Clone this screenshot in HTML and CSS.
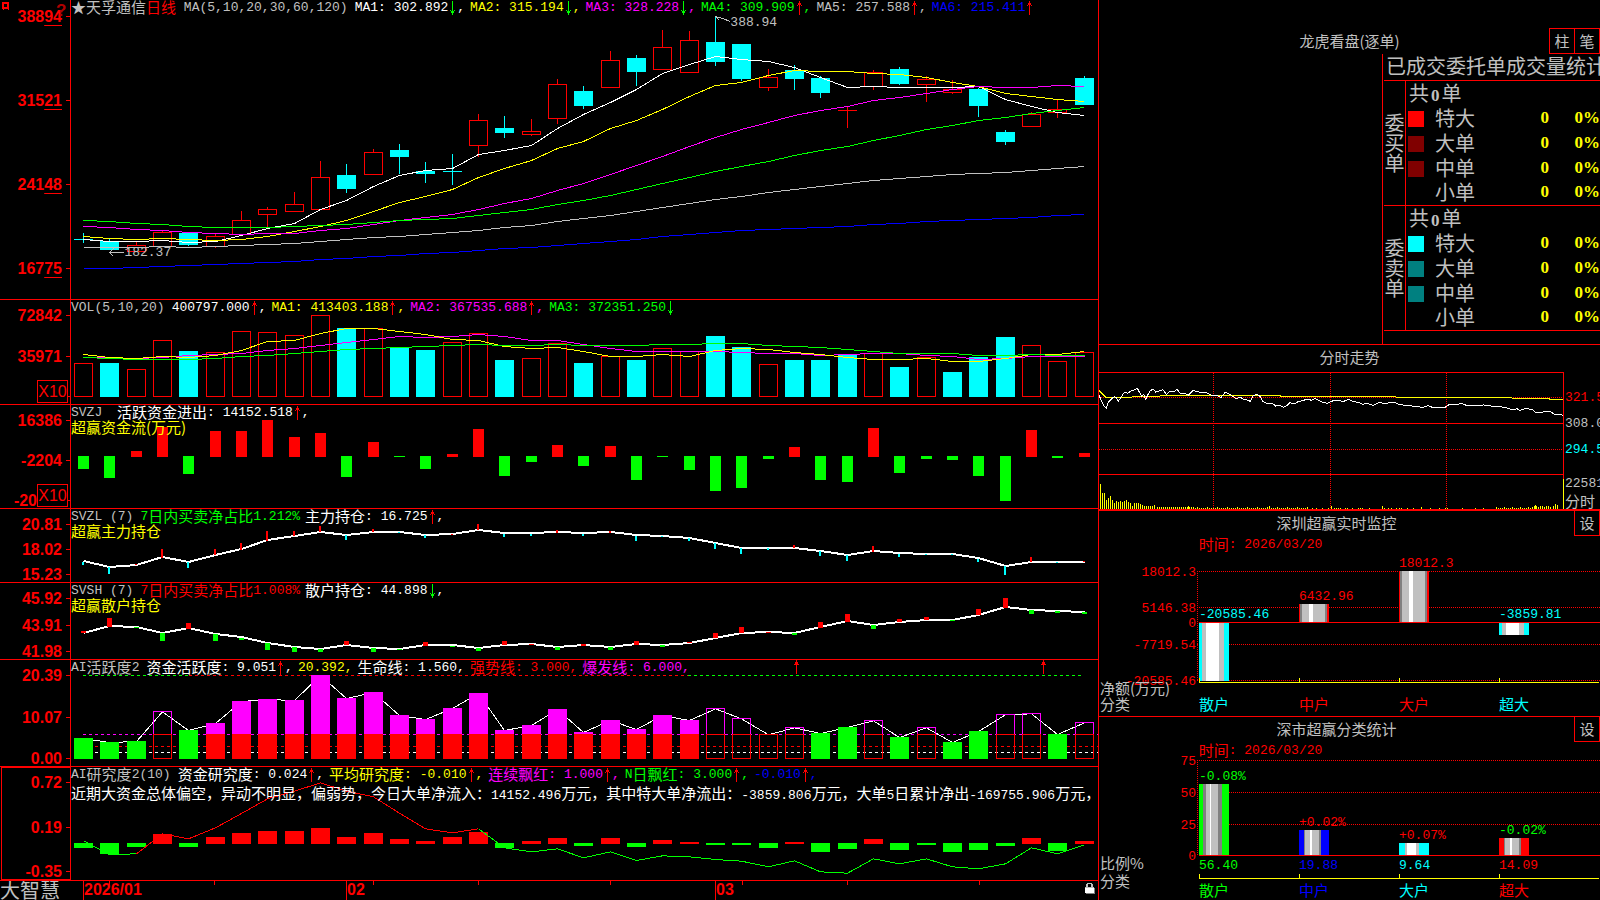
FILE: index.html
```html
<!DOCTYPE html>
<html lang="zh-CN">
<head>
<meta charset="utf-8">
<title>大智慧 - 天孚通信</title>
<link rel="stylesheet" href="styles.css">
</head>
<body>
<svg class="defs" aria-hidden="true">
  <symbol id="up" viewBox="0 0 5 14"><path d="M2 0h1v14h-1zM1 2h3v2h-3zM0 4h1v1h-1zM4 4h1v1h-1z"/></symbol>
  <symbol id="down" viewBox="0 0 5 14"><path d="M2 0h1v14h-1zM1 10h3v2h-3zM0 9h1v1h-1zM4 9h1v1h-1z"/></symbol>
</svg>
<div class="terminal">
  <main class="charts">
    <section class="panel">
      <ol class="axis axis-price"><li><span>388<u>94</u></span></li><li><span>315<u>21</u></span></li><li><span>241<u>48</u></span></li><li><span>167<u>75</u></span></li></ol>
      <svg class="corner" viewBox="0 0 8 8" aria-hidden="true"><path d="M0 0h7v7h-7zM2 2v3h3v-3z" fill-rule="evenodd"/><path d="M1 6h1v2h-1zM6 6h1v2h-1z"/></svg>
      <span class="help">?</span>
      <div class="plot">
        <svg class="canvas" id="price" viewBox="71 0 1027 299" preserveAspectRatio="none"></svg>
        <header class="legend">
          <span class="title"><span class="zh">★天孚通信<span class="red">日线</span></span>&nbsp;MA(5,10,20,30,60,120)</span>
          <span class="white">MA1: 302.892<svg class="arrow down"><use href="#down"/></svg>,</span>
          <span class="yellow">MA2: 315.194<svg class="arrow down"><use href="#down"/></svg>,</span>
          <span class="magenta">MA3: 328.228<svg class="arrow down"><use href="#down"/></svg>,</span>
          <span class="green">MA4: 309.909<svg class="arrow"><use href="#up"/></svg>,</span>
          <span class="grey">MA5: 257.588<svg class="arrow"><use href="#up"/></svg>,</span>
          <span class="blue">MA6: 215.411<svg class="arrow"><use href="#up"/></svg></span>
        </header>
        <span class="mark mark-low">182.37</span>
        <span class="mark mark-high">388.94</span>
      </div>
    </section>

    <section class="panel">
      <ol class="axis"><li>72842</li><li>35971</li><li></li></ol>
      <span class="unit">X10</span>
      <div class="plot">
        <svg class="canvas" id="vol" viewBox="71 300 1027 104" preserveAspectRatio="none"></svg>
        <header class="legend">
          <span class="title">VOL(5,10,20)</span>
          <span class="white">400797.000<svg class="arrow"><use href="#up"/></svg>,</span>
          <span class="yellow">MA1: 413403.188<svg class="arrow"><use href="#up"/></svg>,</span>
          <span class="magenta">MA2: 367535.688<svg class="arrow"><use href="#up"/></svg>,</span>
          <span class="green">MA3: 372351.250<svg class="arrow down"><use href="#down"/></svg></span>
        </header>
      </div>
    </section>

    <section class="panel">
      <ol class="axis"><li>16386</li><li>-2204</li><li><span class="partial">-20</span></li></ol>
      <span class="unit">X10</span>
      <div class="plot">
        <svg class="canvas" id="flow" viewBox="71 405 1027 103" preserveAspectRatio="none"></svg>
        <header class="legend">
          <span class="title">SVZJ&nbsp;</span>
          <span class="white"><span class="zh">活跃资金进出</span>: 14152.518<svg class="arrow"><use href="#up"/></svg>,</span>
        </header>
        <p class="sub zh yellow">超赢资金流(万元)</p>
      </div>
    </section>

    <section class="panel">
      <ol class="axis"><li>20.81</li><li>18.02</li><li>15.23</li></ol>
      <div class="plot">
        <svg class="canvas" id="main-hold" viewBox="71 509 1027 73" preserveAspectRatio="none"></svg>
        <header class="legend">
          <span class="title">SVZL (7)</span>
          <span class="green">7<span class="zh">日内买卖净占比</span>1.212%</span>
          <span class="white"><span class="zh">主力持仓</span>: 16.725<svg class="arrow"><use href="#up"/></svg>,</span>
        </header>
        <p class="sub zh yellow">超赢主力持仓</p>
      </div>
    </section>

    <section class="panel">
      <ol class="axis"><li>45.92</li><li>43.91</li><li>41.98</li></ol>
      <div class="plot">
        <svg class="canvas" id="retail-hold" viewBox="71 583 1027 76" preserveAspectRatio="none"></svg>
        <header class="legend">
          <span class="title">SVSH (7)</span>
          <span class="red">7<span class="zh">日内买卖净占比</span>1.008%</span>
          <span class="white"><span class="zh">散户持仓</span>: 44.898<svg class="arrow down"><use href="#down"/></svg>,</span>
        </header>
        <p class="sub zh yellow">超赢散户持仓</p>
      </div>
    </section>

    <section class="panel">
      <ol class="axis"><li>20.39</li><li>10.07</li><li>0.00</li></ol>
      <div class="plot">
        <svg class="canvas" id="active" viewBox="71 660 1027 106" preserveAspectRatio="none"></svg>
        <header class="legend">
          <span class="title">AI<span class="zh">活跃度</span>2</span>
          <span class="white"><span class="zh">资金活跃度</span>: 9.051<svg class="arrow"><use href="#up"/></svg>,</span>
          <span class="yellow">20.392,</span>
          <span class="white"><span class="zh">生命线</span>: 1.560,</span>
          <span class="red"><span class="zh">强势线</span>: 3.000,</span>
          <span class="magenta"><span class="zh">爆发线</span>: 6.000,</span>
        </header>
      </div>
    </section>

    <section class="panel">
      <ol class="axis axis-selected"><li>0.72</li><li>0.19</li><li>-0.35</li></ol>
      <div class="plot">
        <svg class="canvas" id="research" viewBox="71 767 1027 113" preserveAspectRatio="none"></svg>
        <header class="legend">
          <span class="title">AI<span class="zh">研究度</span>2(10)</span>
          <span class="white"><span class="zh">资金研究度</span>: 0.024<svg class="arrow"><use href="#up"/></svg>,</span>
          <span class="yellow"><span class="zh">平均研究度</span>: -0.010<svg class="arrow"><use href="#up"/></svg>,</span>
          <span class="magenta"><span class="zh">连续飘红</span>: 1.000<svg class="arrow"><use href="#up"/></svg>,</span>
          <span class="green">N<span class="zh">日飘红</span>: 3.000<svg class="arrow"><use href="#up"/></svg>,</span>
          <span class="blue">-0.010<svg class="arrow"><use href="#up"/></svg>,</span>
        </header>
        <p class="comment white"><span class="zh">近期大资金总体偏空，异动不明显，偏弱势，今日大单净流入：</span>14152.496<span class="zh">万元，其中特大单净流出：</span>-3859.806<span class="zh">万元，大单</span>5<span class="zh">日累计净出</span>-169755.906<span class="zh">万元，</span></p>
      </div>
    </section>

    <footer class="timeline">
      <span class="brand">大智慧</span>
      <div class="months">
        <svg class="canvas" id="ticks" viewBox="71 881 1027 19" preserveAspectRatio="none"></svg>
        <span></span><span class="month">2026/01</span><span class="month">02</span><span class="month">03</span>
        <svg class="lock" viewBox="0 0 10 11" aria-hidden="true"><path fill="#c0c0c0" d="M2 0h5v1h-5zM1 1h2v3h-2zM6 1h2v3h-2z"/><path fill="#808080" d="M1 10h9v1h-9zM9 5h1v6h-1z"/><path fill="#fff" d="M0 4h9v6h-9z"/><path fill="#c0c0c0" d="M0 4h9v1h-9z"/></svg>
      </div>
    </footer>
  </main>

  <aside class="side">
    <section class="orders">
      <div class="orders-head">
        <h2 class="zh">龙虎看盘(逐单)</h2>
        <div class="modes"><button type="button">柱</button><button type="button">笔</button></div>
      </div>
      <div class="orders-body">
        <table class="stats">
          <caption>已成交委托单成交量统计</caption>
          <tbody>
            <tr><th rowspan="5" scope="rowgroup" class="group">委<br>买<br>单</th><td colspan="4" class="sum">共<b>0</b>单</td></tr>
            <tr><td class="key"><i class="swatch buy1"></i></td><th scope="row">特大</th><td>0</td><td>0%</td></tr>
            <tr><td class="key"><i class="swatch buy2"></i></td><th scope="row">大单</th><td>0</td><td>0%</td></tr>
            <tr><td class="key"><i class="swatch buy2"></i></td><th scope="row">中单</th><td>0</td><td>0%</td></tr>
            <tr class="last"><td class="key"></td><th scope="row">小单</th><td>0</td><td>0%</td></tr>
          </tbody>
          <tbody>
            <tr><th rowspan="5" scope="rowgroup" class="group">委<br>卖<br>单</th><td colspan="4" class="sum">共<b>0</b>单</td></tr>
            <tr><td class="key"><i class="swatch sell1"></i></td><th scope="row">特大</th><td>0</td><td>0%</td></tr>
            <tr><td class="key"><i class="swatch sell2"></i></td><th scope="row">大单</th><td>0</td><td>0%</td></tr>
            <tr><td class="key"><i class="swatch sell2"></i></td><th scope="row">中单</th><td>0</td><td>0%</td></tr>
            <tr class="last"><td class="key"></td><th scope="row">小单</th><td>0</td><td>0%</td></tr>
          </tbody>
        </table>
      </div>
    </section>

    <section class="intraday">
      <h2 class="zh">分时走势</h2>
      <div class="intraday-body">
        <div class="intraday-plot"><svg class="canvas" id="intraday" viewBox="1099 372 465 137" preserveAspectRatio="none"></svg></div>
        <ol class="levels"><li class="red">321.5</li><li class="grey">308.0</li><li class="cyan">294.5</li><li class="grey">22581</li><li class="grey zh">分时</li></ol>
      </div>
    </section>

    <section class="monitor">
      <div class="monitor-head"><h2 class="zh">深圳超赢实时监控</h2><button type="button">设</button></div>
      <p class="date red"><span class="zh">时间</span>: 2026/03/20</p>
      <div class="bars" id="net"><svg class="canvas" viewBox="1099 554 501 162" preserveAspectRatio="none"></svg></div>
    </section>

    <section class="monitor share">
      <div class="monitor-head"><h2 class="zh">深市超赢分类统计</h2><button type="button">设</button></div>
      <p class="date red"><span class="zh">时间</span>: 2026/03/20</p>
      <div class="bars" id="ratio"><svg class="canvas" viewBox="1099 759 501 141" preserveAspectRatio="none"></svg></div>
    </section>
  </aside>
</div>
<script src="charts.js"></script>
</body>
</html>
```
FILE: styles.css
```css
* { box-sizing: border-box; }

body {
  margin: 0;
  background: #000;
  color: #c0c0c0;
  font-family: "Liberation Mono", "Noto Sans CJK SC", monospace;
  font-size: 13px;
  line-height: 16px;
}

h2, p, ol { margin: 0; padding: 0; font-weight: 400; list-style: none; }

.defs { position: absolute; width: 0; height: 0; }
.zh { font-family: "Noto Sans CJK SC", sans-serif; font-size: 15px; font-weight: 400; }
.white { color: #fff; }
.yellow { color: #ff0; }
.magenta { color: #f0f; }
.green { color: #0f0; }
.grey { color: #c0c0c0; }
.blue { color: #00f; }
.cyan { color: #0ff; }
.red { color: #f00; }

.terminal {
  display: grid;
  grid-template-columns: minmax(0, 1099fr) minmax(0, 501fr);
  height: 100vh;
  overflow: hidden;
}

/* left: stacked indicator charts */
.charts {
  display: grid;
  grid-template-rows: 300fr 105fr 104fr 74fr 77fr 107fr 114fr 19fr;
  min-height: 0;
  border-right: 1px solid #f00;
}
.panel {
  position: relative;
  display: grid;
  grid-template-columns: 71px minmax(0, 1fr);
  min-height: 0;
  border-bottom: 1px solid #f00;
}
.axis {
  display: flex;
  flex-direction: column;
  justify-content: space-between;
  padding: 15px 0 7px;
  border-right: 1px solid #f00;
  color: #f00;
  font: 700 16px/1px "Liberation Sans", sans-serif;
}
.axis-price { padding: 16px 0 30px; }
.axis-selected { border: 1px solid #f00; margin-left: 1px; padding-top: 14px; }
.axis li {
  display: flex;
  justify-content: flex-end;
  align-items: center;
  gap: 4px;
  height: 1px;
}
.axis li::after { content: ""; width: 4px; height: 1px; background: #f00; }
.axis u { text-decoration-thickness: 1px; text-underline-offset: 3px; }
.partial { margin-right: 25px; }

.unit {
  position: absolute;
  left: 37px;
  bottom: 1px;
  width: 31px;
  height: 23px;
  border: 1px solid #f00;
  background: #000;
  color: #f00;
  font: 16px/21px "Liberation Sans", sans-serif;
  text-align: center;
}
.corner { position: absolute; left: 2px; top: 2px; width: 8px; height: 8px; fill: #f00; }
.help { position: absolute; left: 56px; top: 2px; color: #b00000; font: 700 17px/18px "Liberation Sans", sans-serif; }

.plot { position: relative; min-width: 0; }
.canvas { position: absolute; inset: 0; width: 100%; height: 100%; shape-rendering: crispEdges; }
.canvas * { vector-effect: non-scaling-stroke; }
.legend { position: relative; display: flex; gap: 5px; height: 16px; white-space: nowrap; }
.legend > span { display: flex; align-items: center; height: 16px; white-space: pre; }
.legend .zh { line-height: 14px; padding-bottom: 2px; }
.legend .zh .red { line-height: 14px; }
.title { margin-right: 2px; color: #c0c0c0; }
.arrow { width: 5px; height: 14px; margin: 0 2px; fill: #f00; shape-rendering: crispEdges; }
.arrow.down { fill: #0f0; }
.sub { position: relative; line-height: 12px; }
.comment { position: relative; height: 20px; line-height: 20px; white-space: nowrap; }
.mark { position: absolute; color: #c0c0c0; }
.mark-low { left: 5.2%; top: 82%; }
.mark-high { left: 64.2%; top: 5%; }

.timeline { display: grid; grid-template-columns: 71px minmax(0, 1fr); min-height: 0; }
.brand { font: 400 20px/18px "Noto Sans CJK SC", sans-serif; }
.months { position: relative; display: grid; grid-template-columns: 12fr 263fr 369fr 383fr; }
.month { border-left: 1px solid #f00; color: #f00; font: 700 16px/18px "Liberation Sans", sans-serif; }
.lock { position: absolute; right: 3px; top: 2px; width: 10px; height: 11px; shape-rendering: crispEdges; }

/* right: side panels */
.side { display: grid; grid-template-rows: 345fr 165fr 207fr 183fr; min-height: 0; }
.side section { display: flex; flex-direction: column; min-height: 0; overflow: hidden; border-bottom: 1px solid #f00; }
.side .share { border-bottom: 0; }
.side button {
  width: 26px;
  height: 26px;
  padding: 0;
  border: 1px solid #f00;
  background: #000;
  color: #c0c0c0;
  font: 400 15px/22px "Noto Sans CJK SC", sans-serif;
}
.orders-head { display: grid; grid-template-columns: 1fr auto 1fr; align-items: center; padding-top: 28px; }
.orders-head h2 { grid-column: 2; }
.modes { display: flex; justify-self: end; }
.modes button + button { margin-left: -1px; }
.orders-body { flex: 1; align-self: flex-end; width: 218px; padding-left: 1px; overflow: hidden; border-left: 1px solid #f00; }
.stats { width: 100%; border-spacing: 0; font: 400 20px/22px "Noto Sans CJK SC", sans-serif; }
.stats caption { height: 27px; padding-left: 2px; border-bottom: 1px solid #f00; line-height: 24px; text-align: left; white-space: nowrap; contain: inline-size; }
.stats tr { height: 25px; }
.stats th { padding: 0; font-weight: 400; line-height: 20px; text-align: left; }
.stats td { height: 25px; padding: 0 0 2px; color: #ff0; font: 700 17px/20px "Liberation Serif", serif; text-align: right; vertical-align: middle; }
.stats tbody th[scope="row"] { padding: 0 0 2px; vertical-align: middle; }
.stats .group { width: 22px; border-right: 1px solid #f00; border-bottom: 1px solid #f00; text-align: center; vertical-align: middle; }
.stats .sum { padding-left: 3px; color: #c0c0c0; font: 400 20px/20px "Noto Sans CJK SC", sans-serif; text-align: left; }
.stats .sum b { padding: 0 2px; font: 700 17px/1px "Liberation Serif", serif; }
.stats .key { width: 29px; padding: 0 0 0 2px; text-align: left; }
.stats td:last-child:not(.sum) { width: 51px; }
.stats .last td, .stats .last th { border-bottom: 1px solid #f00; }
.swatch { display: block; width: 16px; height: 16px; }
.buy1 { background: #f00; }
.buy2 { background: #800000; }
.sell1 { background: #0ff; }
.sell2 { background: #008080; }

.intraday h2 { line-height: 24px; height: 27px; text-align: center; }
.intraday-body { display: flex; flex: 1; min-height: 0; }
.intraday-plot { position: relative; flex: 1; }
.levels { display: grid; grid-template-rows: 26fr 26fr 26fr 34fr 17fr 8fr; width: 36px; padding-left: 1px; }
.levels li { align-self: end; height: 0; line-height: 0; }

.monitor:nth-of-type(3) { border-top: 1px solid #f00; }
.monitor-head { display: flex; height: 25px; }
.monitor-head h2 { flex: 1; line-height: 24px; text-align: center; }
.monitor-head button { margin-top: -1px; }
.date { display: flex; align-items: center; height: 17px; padding-left: 19.9%; white-space: pre; }
.date .zh { line-height: 14px; padding-bottom: 2px; }
.bars { position: relative; flex: 1; }
.tag { position: absolute; line-height: 0; white-space: pre; }
.tag.end { transform: translateX(-100%); }
```
FILE: charts.js
```js
const RED = '#f00', CYAN = '#0ff', GREEN = '#0f0', WHITE = '#fff', YELLOW = '#ff0', MAGENTA = '#f0f', GREY = '#c0c0c0', BLUE = '#00f';
const NS = 'http://www.w3.org/2000/svg';

function add(svg, tag, attrs) {
  const el = document.createElementNS(NS, tag);
  for (const k in attrs) el.setAttribute(k, attrs[k]);
  svg.appendChild(el);
  return el;
}
const nums = s => s.trim().split(/[\s,]+/).map(Number);
const dayX = i => Math.round(83.1 + 26.33 * i);
const get = id => document.getElementById(id);
const fill = (svg, x, y, w, h, color) => add(svg, 'rect', { x, y, width: w, height: h, fill: color });
const frame = (svg, x, y, w, h, color) => add(svg, 'rect', { x: x + 0.5, y: y + 0.5, width: w - 1, height: h - 1, fill: 'none', stroke: color });
const poly = (svg, pts, color, width = 1) => add(svg, 'polyline', { points: pts.map(p => p.join(',')).join(' '), fill: 'none', stroke: color, 'stroke-width': width });
const line = (svg, x1, y1, x2, y2, color, dash) => add(svg, 'line', Object.assign({ x1, y1, x2, y2, stroke: color }, dash ? { 'stroke-dasharray': dash } : {}));

/* series are stored in thirds of a unit from the panel origin */
const at = (origin, v) => Math.round(origin + (v - 1) / 3);
const series = (svg, origin, s, color, width = 1) =>
  poly(svg, nums(s).map((v, i) => [dayX(i) + 0.5, at(origin, v) + (width === 1 ? 0.5 : 0)]), color, width);
const bars = s => s.trim().split(/\s+/).map(t => [t[0], Number(t.slice(1))]);

/* price */
{
  const svg = get('price');
  const candles = `c699,717,717,729 c717,724,750,750 r727,736,752,754 r693,697,738,742 c699,699,735,738 r702,709,738,744
  r633,661,703,709 r621,628,643,683 r576,613,632,636 r483,532,626,628 c492,525,567,579 r447,457,521,525 c432,450,471,522
  c486,513,522,549 c462,514,514,555 r342,361,434,470 c348,384,399,414 r357,394,401,408 r237,253,355,372 c258,273,318,327
  r153,181,260,260 c165,174,216,258 r90,142,206,206 r93,121,215,219 c48,126,186,198 c132,132,237,243 r207,232,260,273
  c195,210,237,270 c228,234,279,294 r320,331,331,384 r210,217,257,270 c201,207,252,255 r228,238,251,306 r240,268,275,281
  c264,267,318,351 c390,396,426,435 r336,343,377,381 r299,328,335,354 c228,234,315,315`;
  candles.trim().split(/\s+/).forEach((t, i) => {
    const up = t[0] === 'r', color = up ? RED : CYAN, x = dayX(i);
    const [hi, top, bot, lo] = nums(t.slice(1)).map(v => Math.round(v / 3));
    if (top === bot) { fill(svg, x - 9, top, 19, 1, color); fill(svg, x, hi, 1, lo - hi, color); return; }
    fill(svg, x, hi, 1, Math.max(0, top - hi), color);
    fill(svg, x, bot, 1, Math.max(0, lo - bot), color);
    if (up) frame(svg, x - 9, top, 19, bot - top + 1, color); else fill(svg, x - 9, top, 19, bot - top, color);
  });
  series(svg, 0, '805,805,802,799,797,794,791,788,785,779,775,770,766,761,757,751,746,742,736,730,724,718,709,703,697,691,688,685,682,679,673,670,664,661,658,655,652,647,643', BLUE);
  series(svg, 0, '742,742,742,740,742,739,737,734,731,725,718,712,709,703,697,690,682,675,664,655,646,634,622,610,598,589,578,569,560,550,541,535,529,523,520,517,511,506,499', GREY);
  series(svg, 0, '718,724,725,721,727,724,706,685,670,628,601,560,527,510,505,463,451,436,385,343,306,268,220,192,170,178,184,202,232,262,260,262,262,262,258,298,318,338,346', WHITE);
  series(svg, 0, '709,714,718,716,719,722,717,708,695,679,661,635,607,588,569,532,505,482,445,424,386,361,328,289,257,246,226,211,214,214,219,223,231,246,258,280,289,297,304', YELLOW);
  series(svg, 0, '679,682,687,691,696,700,703,701,700,691,685,674,662,653,643,628,610,595,571,551,523,496,469,439,412,388,367,346,332,319,301,292,280,268,259,262,262,257,259', MAGENTA);
  series(svg, 0, '661,664,670,673,679,682,682,682,680,676,674,667,661,658,654,646,637,628,613,601,586,568,550,532,514,500,485,466,452,438,420,406,388,376,360,352,340,332,322', GREEN);
  poly(svg, [[113.5, 248.5], [109.5, 252.5], [113.5, 256.5]], GREY);
  line(svg, 109, 252.5, 124, 252.5, GREY);
  poly(svg, [[715.5, 16.5], [722.5, 18.5], [730.5, 21.5]], GREY);
  poly(svg, [[715.5, 16.5], [719.5, 20.5]], GREY);
}

/* volume */
{
  const svg = get('vol'), base = 397;
  bars(`r205 c204 r223 r136 c168 r172 r109 r112 r121 r61 c99 r100 c158 c165 r142 r115 c195 r190 r145 c204 r184 c195 r160 r170
  c123 c156 r208 c195 c195 c181 r176 c216 r186 c231 c186 c126 r151 r198 r172`).forEach(([k, v], i) => {
    const y = at(295, v), x = dayX(i) - 9;
    if (k === 'r') frame(svg, x, y, 19, base - y, RED); else fill(svg, x, y, 19, base - y, CYAN);
  });
  series(svg, 295, '187,187,190,186,180,179,176,166,160,151,143,132,124,127,125,119,124,135,136,149,160,169,169,169,168,172,175,175,181,178,175,176,180,185,193,190,184,184,184', MAGENTA);
  series(svg, 295, '178,187,191,184,187,181,165,139,135,116,100,100,108,119,132,137,154,160,157,169,184,184,178,184,166,160,164,171,177,188,193,193,190,199,199,190,179,178,169', YELLOW);
  series(svg, 295, '187,190,192,193,193,189,184,181,175,169,163,160,156,154,151,149,151,151,148,151,151,151,149,148,145,145,150,154,158,162,169,175,175,176,181,181,178,181,182', GREEN);
}

/* bars growing up (red) or down (green) from a zero line */
function signed(svg, origin, zero, width, s) {
  bars(s).forEach(([k, v], i) => {
    const x = dayX(i) - (width - 1) / 2, y = Math.round(origin + v / 3);
    if (k === 'r') fill(svg, x, y, width, zero + 1 - y, RED); else fill(svg, x, zero, width, y - zero, GREEN);
  });
}
signed(get('flow'), 295, 456, 11, `g522 g549 r468 r396 g537 r408 r408 r375 r426 r414 g546 r441 g486 g522 r477 r402 g543 g501 r450 g513
  r453 g555 g486 g525 g588 g579 g492 r456 g555 g561 r399 g534 g492 g495 g543 g618 r405 g489 r474`);

/* holdings: a heavy line with ticks to each side */
function holding(svg, values, ticks, width, down) {
  const v = nums(values);
  series(svg, 500, values, WHITE, 2);
  bars(ticks).forEach(([k, t], i) => {
    const a = Math.round(500 + v[i] / 3), b = Math.round(500 + t / 3);
    fill(svg, dayX(i) - (width - 1) / 2 | 0, Math.min(a, b), width, Math.max(1, Math.abs(b - a)), k === 'r' ? RED : down);
  });
}
holding(get('main-hold'),
  '185,201,196,173,187,166,149,122,108,96,105,96,97,105,104,90,101,101,98,101,98,107,108,114,130,144,144,144,154,165,155,161,162,162,176,198,186,186,186',
  `c194 c222 r192 r147 c204 r147 r129 r93 r93 r78 c120 r87 c99 c114 r102 r72 c111 c108 r90 c108 r93 c123 c111 c123 c147 c162 c150
  r135 c168 c183 r138 c171 c165 c165 c186 c225 r171 c189 r184`, 2, CYAN);
holding(get('retail-hold'),
  '399,380,381,399,386,403,413,430,442,448,436,444,447,437,437,445,435,434,441,437,441,434,436,430,415,400,398,399,383,365,376,367,361,360,346,323,330,333,336',
  `r393 r354 g384 g423 r369 g423 g420 g450 g456 g456 r423 g456 g450 r426 g441 g453 r423 r432 g450 r432 g450 r423 g441 r426 r399
  r381 r396 g405 r366 r342 g387 r357 r351 g363 r327 r294 g342 g339 g342`, 5, GREEN);

/* activity */
{
  const svg = get('active'), base = 759, split = 734;
  const data = bars(`g249 g261 g258 h169 g225 m204 m138 m132 m135 m60 m129 m111 m180 m192 m159 m114 m225 m210 m162 m231 m195 m222
  m180 m195 h160 h190 h238 h217 g234 g216 h196 g246 h217 g261 g228 h178 h175 g237 h202`);
  line(svg, 83, 675.5, 189, 675.5, GREEN, '3 3');
  line(svg, 189, 675.5, 688, 675.5, RED, '3 3');
  line(svg, 688, 675.5, 1084, 675.5, GREEN, '3 3');
  line(svg, 83, 734.5, 1098, 734.5, MAGENTA, '3 3');
  line(svg, 83, 746.5, 1098, 746.5, RED, '3 3');
  line(svg, 83, 752.5, 1098, 752.5, WHITE, '3 3');
  poly(svg, data.map(([, v], i) => [dayX(i) + 0.5, 655.5 + v / 3]), WHITE);
  data.forEach(([k, v], i) => {
    const x = dayX(i) - 9, y = Math.round(655 + v / 3);
    if (k === 'g') fill(svg, x, y, 19, base - y, GREEN);
    if (k === 'm') { fill(svg, x, y, 19, split - y, MAGENTA); fill(svg, x, split, 19, base - split, RED); }
    if (k === 'h') {
      if (y < split) frame(svg, x, y, 19, split - y + 1, MAGENTA);
      frame(svg, x, split, 19, base - split, RED);
    }
  });
  [796, 1043].forEach(x => {
    fill(svg, x, 660, 1, 14, RED);
    fill(svg, x - 1, 662, 3, 2, RED);
    fill(svg, x - 2, 664, 5, 1, RED);
  });
}

/* research */
{
  const svg = get('research');
  signed(svg, 655, 843, 19, `g579 g597 g576 r537 g576 r546 r534 r528 r528 r519 r546 r534 r552 r558 r546 r531 g579 r558 r549 g573 r549
  g576 r555 r561 g570 g570 g579 r561 g591 g582 r552 g585 g570 g591 g585 g573 r549 g588 r558`);
  const pts = nums('556,597,595,535,550,517,474,430,407,382,407,424,473,520,532,520,577,589,580,607,589,615,601,604,612,617,634,616,649,653,610,625,610,634,640,625,577,595,568')
    .map((v, i) => [dayX(i) + 0.5, 655.5 + v / 3]);
  poly(svg, pts.slice(0, 3), GREEN);
  poly(svg, pts.slice(2, 16), RED);
  poly(svg, pts.slice(15), GREEN);
}

[109, 214, 373, 478, 610, 742, 847, 979].forEach(x => fill(get('ticks'), x, 881, 1, 4, RED));

/* intraday */
{
  const svg = get('intraday');
  const pairs = s => { const n = nums(s), out = []; for (let i = 0; i < n.length; i += 2) out.push([1095 + n[i] / 3, 340 + n[i + 1] / 3]); return out; };
  [397, 449].forEach(y => line(svg, 1099, y + 0.5, 1563, y + 0.5, RED, '1 1'));
  [1213, 1330, 1446].forEach(x => line(svg, x + 0.5, 373, x + 0.5, 509, RED, '1 1'));
  [372, 423, 474].forEach(y => fill(svg, 1099, y, 465, 1, RED));
  fill(svg, 1563, 372, 1, 137, RED);
  const heights = {};
  nums('75 48 48 27 33 40 27 18 24 21 24 21 24 27 21 18 9 18 18 18 15 12 9 9 9 9 9 12').forEach((h, i) => heights[16 + 6 * i] = h);
  for (let x = 187, i = 0; x < 640; x += 6, i++) heights[x] = x < 240 || i % 5 === 0 ? 6 : x < 300 ? 7 : 3;
  nums('653 665 683 701 719 725 731 737 752 758 773 791 797 803 824 868 880 890 905 914 920 938 956 1007 1034 1052 1058 1102 1142 1166').forEach(x => heights[x] = 3);
  for (let x = 1204, i = 0; x < 1372; x += 6, i++) heights[x] = x > 1310 ? 6 + (i % 3 ? 3 : 0) : i % 4 ? 3 : 6;
  Object.assign(heights, { 280: 9, 523: 9, 710: 9, 862: 9, 980: 6, 1322: 12, 1376: 9, 1382: 15, 1388: 12, 1405: 90 });
  for (const x in heights) { const h = Math.round(heights[x] / 3); fill(svg, Math.round(1095 + x / 3 - 0.5), 509 - h, 1, h, YELLOW); }
  poly(svg, pairs('12,151 32,172 110,172 112,169 194,169 196,166 556,166 558,169 902,169 904,172 1250,172 1252,175 1362,175 1364,178 1404,178'), YELLOW);
  poly(svg, pairs(`12,165 20,185 28,200 34,205 40,187 48,178 58,170 64,172 70,184 76,175 88,157 98,160 108,153 118,150 127,145 134,158
  140,168 146,163 152,178 158,165 166,152 174,147 182,156 192,153 204,149 214,163 226,153 238,154 246,148 256,160 268,160 280,166
  294,151 306,155 318,157 332,158 340,160 352,168 364,166 378,172 390,158 400,160 412,168 424,176 436,172 446,178 456,180 466,184
  474,168 484,163 494,168 504,184 514,190 526,190 536,193 542,198 552,195 566,202 576,196 584,188 600,191 610,184 624,182 636,177
  650,181 660,176 672,182 684,187 696,190 708,184 722,181 732,182 746,184 760,178 772,184 790,187 802,193 816,190 834,196 852,188
  868,190 900,187 912,193 930,196 950,198 984,202 1000,197 1012,202 1050,202 1062,194 1078,195 1100,190 1116,197 1166,195 1188,198
  1230,202 1244,207 1258,210 1266,206 1274,212 1290,206 1312,208 1322,217 1340,217 1352,214 1366,214 1376,222 1396,223 1404,227`), WHITE);
}

/* category bar charts */
function category(id, top, height, draw) {
  const box = get(id), svg = box.querySelector('svg');
  const tag = (x, y, text, color, cls = '') => {
    const el = document.createElement('span');
    el.className = 'tag ' + color + ' ' + cls;
    el.textContent = text;
    el.style.left = (x - 1099) / 501 * 100 + '%';
    el.style.top = (y - top) / height * 100 + '%';
    box.appendChild(el);
  };
  const cylinder = (x, y, h, stripes) => {
    stripes.split(' ').forEach(s => {
      const [w, c] = s.split(':');
      fill(svg, x, y, Number(w), h, c);
      x += Number(w);
    });
  };
  const scale = y => {
    fill(svg, 1199, y, 400, 1, YELLOW);
    [1199, 1299, 1399, 1499].forEach(x => fill(svg, x, y - 4, 1, 4, YELLOW));
  };
  draw(svg, tag, cylinder, scale);
}

category('net', 554, 162, (svg, tag, cylinder, scale) => {
  [572, 608, 644, 680].forEach(y => line(svg, 1197, y + 0.5, 1600, y + 0.5, RED, '1 1'));
  line(svg, 1197.5, 572, 1197.5, 681, RED, '1 1');
  fill(svg, 1199, 623, 401, 1, RED);
  const cold = '3:#0ff 4:#c0c0c0 13:#fff 5:#c0c0c0 5:#0ff', warm = '1:#f00 2:#808080 7:#c0c0c0 4:#fff 12:#c0c0c0 2:#808080 2:#f00';
  cylinder(1199, 624, 57, cold);
  cylinder(1299, 605, 18, warm);
  cylinder(1399, 572, 51, warm);
  cylinder(1499, 624, 11, cold);
  scale(682);
  [['18012.3', 574], ['5146.38', 610], ['0', 625], ['-7719.54', 646], ['-20585.46', 682]].forEach(([t, y]) => tag(1196, y, t, 'red', 'end'));
  tag(1199, 616, '-20585.46', 'cyan');
  tag(1299, 598, '6432.96', 'red');
  tag(1399, 565, '18012.3', 'red');
  tag(1499, 616, '-3859.81', 'cyan');
  tag(1100, 688, '净额(万元)', 'grey', 'zh');
  tag(1100, 704, '分类', 'grey', 'zh');
  [['散户', 'cyan'], ['中户', 'red'], ['大户', 'red'], ['超大', 'cyan']].forEach(([t, c], i) => tag(1199 + 100 * i, 704, t, c, 'zh'));
});

category('ratio', 759, 141, (svg, tag, cylinder, scale) => {
  [760, 792, 824].forEach(y => line(svg, 1197, y + 0.5, 1600, y + 0.5, RED, '1 1'));
  line(svg, 1197.5, 760, 1197.5, 855, RED, '1 1');
  cylinder(1199, 784, 71, '4:#0f0 3:#808080 4:#c0c0c0 1:#fff 7:#c0c0c0 4:#808080 7:#0f0');
  cylinder(1299, 830, 25, '5:#00f 1:#808080 5:#c0c0c0 2:#fff 7:#c0c0c0 2:#808080 8:#00f');
  cylinder(1399, 843, 12, '6:#0ff 2:#c0c0c0 9:#fff 3:#c0c0c0 10:#0ff');
  cylinder(1499, 838, 17, '5:#f00 1:#808080 5:#c0c0c0 2:#fff 7:#c0c0c0 2:#808080 8:#f00');
  fill(svg, 1199, 855, 401, 1, RED);
  scale(878);
  [['75', 762], ['50', 794], ['25', 826], ['0', 857]].forEach(([t, y]) => tag(1196, y, t, 'red', 'end'));
  tag(1199, 777, '-0.08%', 'green');
  tag(1299, 823, '+0.02%', 'red');
  tag(1399, 836, '+0.07%', 'red');
  tag(1499, 831, '-0.02%', 'green');
  [['56.40', 'green'], ['19.88', 'blue'], ['9.64', 'cyan'], ['14.09', 'red']].forEach(([t, c], i) => tag(1199 + 100 * i, 866, t, c));
  tag(1100, 863, '比例%', 'grey', 'zh');
  tag(1100, 881, '分类', 'grey', 'zh');
  [['散户', 'green'], ['中户', 'blue'], ['大户', 'cyan'], ['超大', 'red']].forEach(([t, c], i) => tag(1199 + 100 * i, 890, t, c, 'zh'));
});
```
